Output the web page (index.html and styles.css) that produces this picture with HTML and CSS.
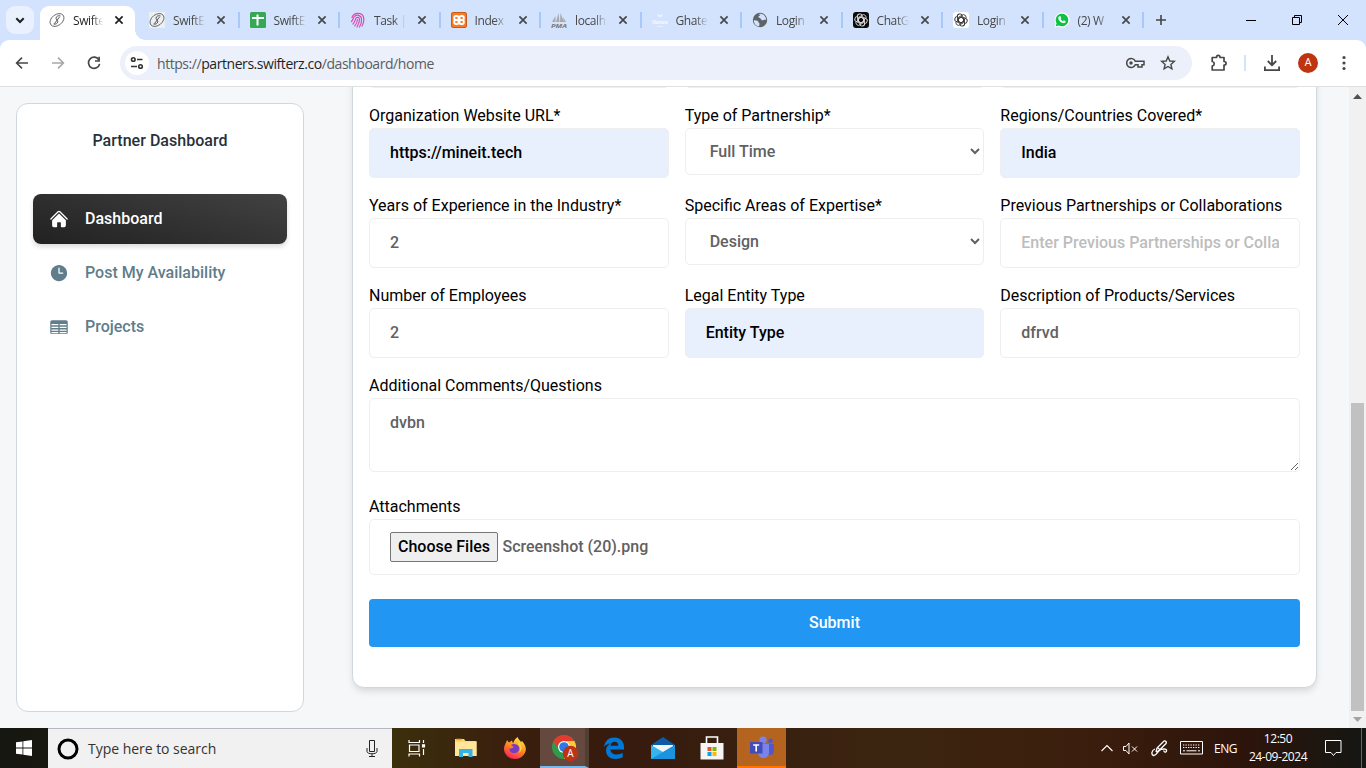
FILE: index.html
```html
<!DOCTYPE html>
<html lang="en">
<head>
<meta charset="utf-8">
<title>Partner Dashboard</title>
<link rel="stylesheet" href="styles.css">
</head>
<body>
<svg class="defs" width="0" height="0">
  <symbol id="x" viewBox="0 0 10 10"><path d="M1.4 1.4l7.2 7.2M8.6 1.4L1.4 8.6" stroke="currentColor" stroke-width="1.7"/></symbol>
  <symbol id="swift" viewBox="0 0 16 16"><g fill="none" stroke="#555"><ellipse cx="8" cy="8" rx="7.800" ry="5.400" transform="rotate(-38 8 8)" stroke-width=".8"/><path d="M11.500 4C9 3.200 7 4.500 7 6.200s2 1.800 1.800 3.600S6.500 12.500 4.500 12M10.500 5L5.500 11.500" stroke-width="1"/></g></symbol>
  <symbol id="knot" viewBox="0 0 16 16"><g fill="none" stroke="currentColor" stroke-width=".9"><path id="petal" d="M8 5.200L10.600 6.700V10.600L7.200 12.600A2.500 2.500 0 0 1 3.700 9"/><use href="#petal" transform="rotate(60 8 8)"/><use href="#petal" transform="rotate(120 8 8)"/><use href="#petal" transform="rotate(180 8 8)"/><use href="#petal" transform="rotate(240 8 8)"/><use href="#petal" transform="rotate(300 8 8)"/></g></symbol>
</svg>

<header class="tabstrip">
  <div class="tabsearch"><svg width="10" height="7" viewBox="0 0 10 7"><path d="M1.300 1.300L5 5l3.700-3.700" fill="none" stroke="#1f1f1f" stroke-width="2"/></svg></div>
  <div class="tab active"><svg class="fav"><use href="#swift"/></svg><span class="ttl">Swifte</span><svg class="close"><use href="#x"/></svg></div>
  <div class="tab"><svg class="fav paper"><use href="#swift"/></svg><span class="ttl">SwiftE</span><svg class="close"><use href="#x"/></svg></div>
  <div class="tab"><svg class="fav" viewBox="0 0 16 16"><rect width="16" height="16" rx="1.500" fill="#34a853"/><path d="M7.500 2.500v11M2 6h12" stroke="#fff" stroke-width="2"/></svg><span class="ttl">SwiftE</span><svg class="close"><use href="#x"/></svg></div>
  <div class="tab"><svg class="fav" viewBox="0 0 16 16"><g fill="none" stroke="#d84bb4" stroke-width="1.200" stroke-linecap="round"><path d="M2 5.500C3.500 0 12 0 13.500 5c.8 3 .2 6-1.500 9M1.500 9.500C3 8 3 6.500 4 5c2-3 7-2 7.500 1.500.4 3-.5 6-2 8.500M3 12c2-2 2-3.500 2.500-5 .8-2.500 4-2 4 .5 0 2.500-1 5-2.500 7.500M4.800 13.800C6.800 11.500 7.300 9.500 7.500 7.500"/></g></svg><span class="ttl">Task |</span><svg class="close"><use href="#x"/></svg></div>
  <div class="tab"><svg class="fav" viewBox="0 0 16 16"><rect x=".5" y=".5" width="15" height="15" rx="1.500" fill="#fb7a24" stroke="#c85a18"/><g fill="none" stroke="#fff" stroke-width="1.900"><rect x="3.200" y="4" width="4.400" height="4" rx="1.700"/><rect x="8.400" y="4" width="4.400" height="4" rx="1.700"/><rect x="3.200" y="8" width="4.400" height="4" rx="1.700"/><rect x="8.400" y="8" width="4.400" height="4" rx="1.700"/></g><path d="M6 8h4" stroke="#fff" stroke-width="2"/></svg><span class="ttl">Index</span><svg class="close"><use href="#x"/></svg></div>
  <div class="tab"><svg class="fav" viewBox="0 0 16 16"><path d="M1 10L4.500 4v6zM5 10L7.500 1l1 9zM9 10l.500-9L13 10zM13 10l-1-5 3 5z" fill="#a9a9a9"/><text x="0" y="15.500" font-size="6" font-weight="bold" font-style="italic" textLength="16" lengthAdjust="spacingAndGlyphs" fill="#777">PMA</text></svg><span class="ttl">localh</span><svg class="close"><use href="#x"/></svg></div>
  <div class="tab"><svg class="fav" viewBox="0 0 16 16"><path d="M6 2l1 3 1-2 1 2 1-3" fill="none" stroke="#f1f6ff"/><text x="0" y="12" font-size="4.500" font-weight="bold" textLength="16" fill="#f3f7ff">Montana</text><path d="M5 14.500h6" stroke="#e6effe"/></svg><span class="ttl">Ghate</span><svg class="close"><use href="#x"/></svg></div>
  <div class="tab"><svg class="fav" viewBox="0 0 16 16"><circle cx="8" cy="8" r="7.200" fill="#5f6368"/><path d="M1.800 8.200c3-.2 4.800.5 4.700 2.300 1.500.3.800 2.700.6 3.700C4 14 1.800 11.500 1.800 8.200zM6 2.200c1 0 2 .2 2.500.8-.8 1.200-2.300.8-2 2.400C8 5.800 9 6.500 9.500 8c1.200.8 2.200-.5 4.600-.2C14 4.500 11.500 1.800 8 1.800z" fill="#d3e3fd"/></svg><span class="ttl">Login</span><svg class="close"><use href="#x"/></svg></div>
  <div class="tab"><svg class="fav" viewBox="0 0 16 16" color="#ddd"><rect width="16" height="16" rx="3" fill="#0b0b0b"/><use href="#knot"/></svg><span class="ttl">ChatG</span><svg class="close"><use href="#x"/></svg></div>
  <div class="tab"><svg class="fav" viewBox="0 0 16 16" color="#333"><rect width="16" height="16" rx="3" fill="#fff"/><use href="#knot"/></svg><span class="ttl">Login</span><svg class="close"><use href="#x"/></svg></div>
  <div class="tab"><svg class="fav" viewBox="0 0 16 16"><path d="M.5 15.500L1.600 11.500A7.500 7.500 0 1 1 4.500 14.500z" fill="#fff"/><path d="M1.700 14.300l.9-3A6.300 6.300 0 1 1 4.900 13.500z" fill="#0cc143"/><path d="M5.300 4.300l1-.2 1 2-.7.9c.5 1 1.200 1.700 2.300 2.200l.9-.9 1.900 1c0 1.500-1.500 2.200-2.800 1.800C6.500 10.300 4.800 8.400 4.300 6.400c0-1 .3-1.600 1-2.100z" fill="#fff"/></svg><span class="ttl">(2) W</span><svg class="close"><use href="#x"/></svg></div>
  <svg class="plus" width="12" height="12" viewBox="0 0 12 12"><path d="M6 1v10M1 6h10" stroke="#444" stroke-width="1.600"/></svg>
  <div class="winctl">
    <svg width="10" height="10" viewBox="0 0 10 10"><path d="M0 5.500h10" stroke="#000"/></svg>
    <svg width="10" height="10" viewBox="0 0 10 10"><path d="M.5 2.500h7v7h-7zM2.500 2.500v-2h7v7h-2" fill="none" stroke="#000"/></svg>
    <svg width="10" height="10" viewBox="0 0 10 10"><path d="M0 0l10 10M10 0L0 10" stroke="#000"/></svg>
  </div>
</header>

<div class="toolbar">
  <svg class="nav-ic" viewBox="0 0 16 16"><path d="M14 8H3M8 2.600L2.600 8 8 13.400" fill="none" stroke="#474747" stroke-width="1.600"/></svg>
  <svg class="nav-ic" viewBox="0 0 16 16"><path d="M2 8h11M8 2.600L13.400 8 8 13.400" fill="none" stroke="#a8a8a8" stroke-width="1.600"/></svg>
  <svg class="nav-ic" viewBox="0 0 16 16"><path d="M13 5A5.600 5.600 0 1 0 13.600 8.800" fill="none" stroke="#474747" stroke-width="1.700"/><path d="M13.900 1.800v5H9V5.200h3.300V1.800z" fill="#474747"/></svg>
  <div class="omnibox">
    <div class="site"><svg width="14" height="14" viewBox="0 0 14 14"><g fill="none" stroke="#333" stroke-width="1.600"><circle cx="3.300" cy="3.500" r="1.800"/><path d="M7 3.500h5.500M1 10.500h6"/><circle cx="10.500" cy="10.500" r="1.800"/></g></svg></div>
    <div class="url"><span>https://</span>partners.swifterz.co<span>/dashboard/home</span></div>
    <svg class="key" width="19" height="12" viewBox="0 0 19 12"><path d="M9.300 4.200a4.500 4.500 0 1 0 0 3.600H12V10h4V7.800h2V4.200z" fill="none" stroke="#474747" stroke-width="1.500"/><circle cx="5" cy="6" r="1.700" fill="#474747"/></svg>
    <svg width="16" height="16" viewBox="0 0 16 16"><path d="M8 1.800l1.800 4.200 4.500.4-3.400 3 1 4.500L8 11.500l-3.900 2.400 1-4.500-3.400-3L6.200 6z" fill="none" stroke="#474747" stroke-width="1.400"/></svg>
  </div>
  <svg class="ext" width="18" height="18" viewBox="0 0 18 18"><path d="M2.200 3.500h4.300c0-2.800 3.500-2.800 3.500 0h4v4c2.800 0 2.800 3.500 0 3.500v5H2.200v-4c2.700-.6 2.700-4 0-4.500z" fill="none" stroke="#474747" stroke-width="1.700" stroke-linejoin="round"/></svg>
  <i class="vsep"></i>
  <svg class="dl" width="18" height="18" viewBox="0 0 18 18"><path d="M9 1v10M4.800 7L9 11.200 13.200 7M1.900 12.500v3.600h14.200v-3.600" fill="none" stroke="#474747" stroke-width="1.800"/></svg>
  <span class="avatar">A</span>
  <svg class="dots" width="4" height="16" viewBox="0 0 4 16"><g fill="#474747"><circle cx="2" cy="2.500" r="1.600"/><circle cx="2" cy="8" r="1.600"/><circle cx="2" cy="13.500" r="1.600"/></g></svg>
</div>

<main class="page">
  <aside class="sidebar">
    <h6>Partner Dashboard</h6>
    <nav>
      <a class="item on"><svg width="20" height="20" viewBox="0 0 24 24" fill="currentColor"><path d="M11.470 3.840a.75.75 0 011.060 0l8.690 8.690a.75.75 0 101.060-1.060l-8.689-8.690a2.250 2.250 0 00-3.182 0l-8.690 8.690a.75.75 0 001.061 1.060l8.690-8.690z"/><path d="M12 5.432l8.159 8.159c.03.03.06.058.091.086v6.198c0 1.035-.84 1.875-1.875 1.875H15a.75.75 0 01-.75-.75v-4.500a.75.75 0 00-.75-.75h-3a.75.75 0 00-.75.750V21a.75.75 0 01-.75.750H5.625a1.875 1.875 0 01-1.875-1.875v-6.198a2.290 2.290 0 00.091-.086L12 5.430z"/></svg><span>Dashboard</span></a>
      <a class="item"><svg width="20" height="20" viewBox="0 0 24 24" fill="currentColor"><path fill-rule="evenodd" d="M12 2.250c-5.385 0-9.750 4.365-9.750 9.750s4.365 9.750 9.750 9.750 9.750-4.365 9.750-9.750S17.385 2.250 12 2.250zM12.750 6a.75.75 0 00-1.500 0v6c0 .414.336.750.750.750h4.500a.75.75 0 000-1.500h-3.750V6z" clip-rule="evenodd"/></svg><span>Post My Availability</span></a>
      <a class="item"><svg width="20" height="20" viewBox="0 0 24 24"><rect x="1.500" y="4" width="21" height="16.500" rx="2" fill="currentColor"/><path d="M3 9.200h8.200M12.800 9.200H21M3 12.400h8.200M12.800 12.400H21M3 15.600h8.200M12.800 15.600H21M3 18.600h8.200M12.800 18.600H21" stroke="#fff" stroke-width="1.500"/></svg><span>Projects</span></a>
    </nav>
  </aside>

  <section class="card">
    <form class="form">
      <div class="row">
        <div class="field"><input type="text"></div><div class="field"><input type="text"></div><div class="field"><input type="text"></div>
      </div>
      <div class="row">
        <div class="field"><label>Organization Website URL*</label><input class="auto" type="text" value="https://mineit.tech"></div>
        <div class="field"><label>Type of Partnership*</label><select><option>Full Time</option></select></div>
        <div class="field"><label>Regions/Countries Covered*</label><input class="auto" type="text" value="India"></div>
      </div>
      <div class="row">
        <div class="field"><label>Years of Experience in the Industry*</label><input type="text" value="2"></div>
        <div class="field"><label>Specific Areas of Expertise*</label><select><option>Design</option></select></div>
        <div class="field"><label>Previous Partnerships or Collaborations</label><input type="text" placeholder="Enter Previous Partnerships or Collaborations"></div>
      </div>
      <div class="row">
        <div class="field"><label>Number of Employees</label><input type="text" value="2"></div>
        <div class="field"><label>Legal Entity Type</label><input class="auto" type="text" value="Entity Type"></div>
        <div class="field"><label>Description of Products/Services</label><input type="text" value="dfrvd"></div>
      </div>
      <div class="field"><label>Additional Comments/Questions</label><textarea>dvbn</textarea></div>
      <div class="field attach"><label>Attachments</label><div class="file"><button type="button">Choose Files</button><span>Screenshot (20).png</span></div></div>
      <button class="submit" type="button">Submit</button>
    </form>
  </section>

  <div class="scrollbar">
    <svg class="up" width="9" height="5" viewBox="0 0 9 5"><path d="M0 5h9L4.500 0z" fill="#505050"/></svg>
    <i class="thumb"></i>
    <svg class="down" width="9" height="5" viewBox="0 0 9 5"><path d="M0 0h9L4.500 5z" fill="#a3a3a3"/></svg>
  </div>
</main>

<footer class="taskbar">
  <div class="cell start"><svg width="16" height="16" viewBox="0 0 16 16" fill="#fff"><path d="M0 2.300l6.500-.9v6.200H0zM7.300 1.300L16 0v7.600H7.300zM0 8.400h6.500v6.200L0 13.700zM7.300 8.400H16V16l-8.700-1.200z"/></svg></div>
  <div class="search"><svg width="22" height="22" viewBox="0 0 22 22"><circle cx="11" cy="11" r="9" fill="none" stroke="#000" stroke-width="3"/></svg><span>Type here to search</span><svg width="12" height="17" viewBox="0 0 12 17"><path d="M3.500.5h5v11h-5zM1 8v3.500c0 3 10 3 10 0V8M6 14v2.500M3 16.500h6" fill="none" stroke="#222"/></svg></div>
  <div class="cell"><svg width="18" height="18" viewBox="0 0 18 18" fill="none" stroke="#fff" stroke-width="1.200"><path d="M1 1v2.500h10.500V1M1.500 6h9.500v6.500H1.500zM1 17.500V15h10.500v2.500M15.500 1v3M15.500 10v6"/><path d="M14.500 5.800h2v2h-2z" fill="#fff"/></svg></div>
  <div class="cell"><svg width="24" height="20" viewBox="0 0 24 20"><path d="M1 1h9l1.500 2H22.500V18H1z" fill="#ffd969"/><path d="M1 4h21.500v14H1z" fill="#ffe69a"/><path d="M2 1.500h6" stroke="#f5a623" stroke-width="1.500"/><path d="M5 19v-8h13.500v8h-4v-4H9v4z" fill="#36b3e6"/></svg></div>
  <div class="cell"><svg width="24" height="24" viewBox="0 0 24 24"><defs><linearGradient id="ff" x1=".8" y1="0" x2=".3" y2="1"><stop offset="0" stop-color="#fff24a"/><stop offset=".5" stop-color="#ff8a1e"/><stop offset="1" stop-color="#f5205f"/></linearGradient></defs><path d="M4 4l2 2.500 3-2 1 3c1-3 2-5 5-6.500-.5 2 2 3 3 5l1-1c3 3 4.500 7 3.500 10.500C21 20 17 23 12 23 6 23 1.500 19 1 13.500 1 9 3 7.500 4 4z" fill="url(#ff)"/><path d="M8 9c2-2 7-1 8 2 1 4-2 6-5 6-3 0-5-2-4.500-4.500 1.500 0 3.500 0 4-1.500z" fill="#7a3bc4"/><path d="M16 6c4 4 3 9 0 11 2-4 1-7-1-9z" fill="#ffd43b"/></svg></div>
  <div class="cell chrome"><svg width="28" height="28" viewBox="0 0 28 28"><circle cx="13" cy="13" r="12" fill="#2c9b4b"/><path d="M2.600 7A12 12 0 0 1 23.400 7H13a6 6 0 0 0-5.200 3L5 13z" fill="#e33b2e"/><path d="M23.400 7A12 12 0 0 1 13 25l5.200-9A6 6 0 0 0 16 8l-1-1z" fill="#fcc934"/><circle cx="13" cy="13" r="6" fill="#fff"/><circle cx="13" cy="13" r="4.800" fill="#2f78e6"/><circle cx="19.500" cy="19.500" r="7.800" fill="#bb3416"/><text x="19.500" y="23.200" text-anchor="middle" font-size="10" fill="#fff">A</text></svg></div>
  <div class="cell"><svg width="22" height="22" viewBox="0 0 22 22"><path d="M1 10C2 3.500 6 .5 11.500.5 17 .5 21 4.500 21 10v2.500H7.300c.3 3 3 5 6.200 5 2.600 0 4.500-.6 6.200-1.700v4.500C17.500 21.300 15.300 22 12.500 22 7 22 3 18.500 3 13.500c0-3.300 2-5.800 4.700-7.200C5 6.800 2.500 8 1 10zM7.500 8.700h7.800c0-2.500-1.300-4-3.700-4S7.700 6.500 7.500 8.700z" fill="#0078d7"/></svg></div>
  <div class="cell"><svg width="24" height="22" viewBox="0 0 24 22"><path d="M0 8L12 0l12 8v4H0z" fill="#0a5ba8"/><path d="M2 8h20v8H2z" fill="#f4f4f4"/><path d="M0 8l12 7 12-7v14H0z" fill="#35b5ef"/><path d="M0 22L24 8v14z" fill="#1b93df"/></svg></div>
  <div class="cell"><svg width="24" height="24" viewBox="0 0 24 24"><path d="M6.500 7V1h11v6" fill="none" stroke="#fff" stroke-width="1.600"/><path d="M.5 7h23v16.500H.5z" fill="#f5f5f5"/><path d="M7.500 11h4v4h-4z" fill="#f25022"/><path d="M12.500 11h4v4h-4z" fill="#7fba00"/><path d="M7.500 16h4v4h-4z" fill="#00a4ef"/><path d="M12.500 16h4v4h-4z" fill="#ffb900"/></svg></div>
  <div class="cell teams"><svg width="24" height="23" viewBox="0 0 24 23"><circle cx="13" cy="4" r="3.600" fill="#7b83eb"/><circle cx="20.500" cy="4.800" r="2.400" fill="#5059c9"/><path d="M16 8h8v7c0 4-4 5-6 3z" fill="#5059c9"/><path d="M8 8h11v8c0 8-11 8-11 0z" fill="#7b83eb"/><path d="M0 6h12.500v11.500H0z" fill="#444db5"/><path d="M3.200 9h6M6.200 9v6.500" stroke="#fff" stroke-width="1.600"/></svg></div>
  <div class="tray">
    <svg class="t1" width="12" height="8" viewBox="0 0 12 8"><path d="M.5 7L6 1.500 11.500 7" fill="none" stroke="#fff" stroke-width="1.100"/></svg>
    <svg class="t2" width="15" height="13" viewBox="0 0 15 13"><path d="M.5 4.500H3l3-3.500v11l-3-3.500H.5zM9 4.500l5 5M14 4.500l-5 5" fill="none" stroke="#fff"/></svg>
    <svg class="t3" width="17" height="17" viewBox="0 0 17 17"><path d="M4 9C.5 10 0 15 2.500 15.500 6 16 6 11 10 9.500c3-1 6-.5 5.500 1.500s-3 1-2.500-.5M5 12L6 8l7-7c1.500-.5 3 1 2 2.500L9.500 9 5.500 12.500M7 8l2.500 2" fill="none" stroke="#fff" stroke-width="1.300"/></svg>
    <svg class="t4" width="23" height="14" viewBox="0 0 23 14"><path d="M.5.500h22v12.500H.5z" fill="none" stroke="#fff"/><path d="M3 4h17M3 6.500h17" stroke="#fff" stroke-dasharray="1.300 1.200"/><path d="M3 9.800h2M6.500 9.800h10M18 9.800h2" stroke="#fff"/></svg>
    <span class="eng">ENG</span>
    <div class="clock"><span>12:50</span><span>24-09-2024</span></div>
    <svg class="t5" width="17" height="17" viewBox="0 0 17 17"><path d="M.5.500h15.500v12H11l-2.500 3-2.500-3H.5z" fill="none" stroke="#fff"/></svg>
    <i class="peek"></i>
  </div>
</footer>
</body>
</html>
```

FILE: styles.css
```css
* { box-sizing: border-box; }
body { margin: 0; width: 1366px; height: 768px; overflow: hidden; display: flex; flex-direction: column; font-family: Roboto, sans-serif; font-size: 16px; background: #d3e3fd; }
svg { flex: none; display: block; }
.defs { position: absolute; }

/* browser tab strip */
.tabstrip { height: 40px; flex: none; display: flex; background: #d3e3fd; font: 12px "Open Sans", sans-serif; color: #444; }
.tabsearch { width: 28px; height: 28px; margin: 6px 6px 0; border-radius: 9px; background: #e9f1fe; display: flex; align-items: center; justify-content: center; }
.tab { width: 100.500px; height: 24px; margin-top: 8px; padding: 0 12px 0 10px; display: flex; align-items: center; position: relative; color: #474747; }
.tab::after { content: ""; position: absolute; right: 0; top: 4px; width: 2px; height: 16px; background: #a8c7fa; }
.tab.active { width: 95px; height: 34px; margin: 6px 4px 0 0; padding: 0 11px 6px 9px; border-radius: 9px 9px 0 0; background: #fff; color: #1f1f1f; }
.tab.active::after { right: -10px; top: auto; bottom: 0; width: 10px; height: 10px; background: radial-gradient(circle at 100% 0, transparent 9.500px, #fff 10px); }
.fav { width: 16px; height: 16px; }
.paper { background: #eeeff1; }
.ttl { width: 34px; margin: 0 9px 0 8px; white-space: nowrap; letter-spacing: -.4px; -webkit-mask-image: linear-gradient(90deg, #000 58%, transparent 94%); mask-image: linear-gradient(90deg, #000 58%, transparent 94%); }
.close { width: 10px; height: 10px; }
.plus { margin: 14px 0 0 11px; }
.winctl { margin: 15px 18px 0 auto; display: flex; gap: 36px; }

/* browser toolbar */
.toolbar { height: 47px; flex: none; display: flex; align-items: center; padding-left: 14px; background: #fff; border-bottom: 1px solid #dfe1e0; border-radius: 9px 9px 0 0; }
.nav-ic { width: 16px; height: 16px; margin-right: 20px; }
.omnibox { width: 1072px; height: 34px; margin-left: -2px; padding: 0 16px 0 5px; border-radius: 17px; background: #ecf0fa; display: flex; align-items: center; }
.site { width: 24px; height: 24px; border-radius: 50%; background: #fff; display: flex; align-items: center; justify-content: center; }
.url { margin-left: 8px; flex: 1; font: 14px "Open Sans", sans-serif; letter-spacing: -.44px; color: #1f1f1f; white-space: nowrap; }
.url span { color: #5a5d61; }
.key { margin-right: 15px; }
.ext { margin-left: 18px; }
.vsep { width: 2px; height: 16px; background: #d3e3fd; margin: 0 17px 0 16px; }
.avatar { width: 20px; height: 20px; margin: 0 24px 0 17px; border-radius: 50%; background: #be3410; color: #fff; font-size: 11px; line-height: 20px; text-align: center; }

/* page */
.page { height: 641px; flex: none; display: flex; overflow: hidden; background: #f5f7f9; }
.sidebar { width: 288px; height: 609px; margin: 16px 48px 0 16px; padding: 24px 16px; flex: none; border: 1px solid #cfd8dc; border-radius: 12px; background: #fff; color: #263238; }
.sidebar h6 { margin: 0 0 41px; font-size: 16px; line-height: 25px; font-weight: 500; text-align: center; letter-spacing: .03px; }
.sidebar nav { display: flex; flex-direction: column; gap: 4px; }
.item { height: 50px; padding-left: 16px; display: flex; align-items: center; gap: 16px; border-radius: 8px; font-weight: 500; color: #607d8b; }
.item span { padding-bottom: 2px; }
.item.on { color: #fff; background: linear-gradient(195deg, #424242, #212121); box-shadow: 0 3px 5px rgba(0,0,0,.14); }
.card { width: 965px; height: 651px; margin-top: -50px; padding: 0 16px; flex: none; border: 1px solid #cfd8dc; border-radius: 12px; background: #fff; box-shadow: 0 4px 7px -1px rgba(0,0,0,.13); }
.form { display: flex; flex-direction: column; }
.row { display: grid; grid-template-columns: repeat(3, minmax(0, 1fr)); gap: 16px; margin-bottom: 16px; }
.field { display: flex; flex-direction: column; }
label { line-height: 24px; color: #000; }
input, select, textarea, .file { width: 100%; height: 50px; border: 1px solid #eee; border-radius: 5px; background: #fff; padding: 0 20px; font: 500 16px Roboto, sans-serif; color: #616161; outline: none; }
input { padding-bottom: 2px; }
input::placeholder { color: #bdbdbd; }
input.auto { background: #e8f0fe; color: #000; }
select { height: 47px; }
textarea { height: 74px; padding: 14px 20px; }
.attach { margin-top: 23px; }
.file { height: 56px; display: flex; align-items: center; gap: 4px; }
.file button { height: 30px; padding: 0 7px 2px; border: 1px solid #767676; border-radius: 2px; background: #efefef; color: #000; font: 500 16px Roboto, sans-serif; }
.file span { padding: 0 0 2px .4px; }
.submit { height: 48px; margin-top: 24px; padding-bottom: 3px; border: 0; border-radius: 4px; background: #2196f3; color: #fff; font: 500 16px Roboto, sans-serif; }
.scrollbar { width: 17px; margin-left: auto; background: #f1f1f1; display: flex; flex-direction: column; align-items: center; }
.up { margin-top: 7px; }
.thumb { width: 13px; height: 308px; margin-top: 304px; background: #c1c1c1; }
.down { margin-top: 6px; }

/* taskbar */
.taskbar { height: 40px; flex: none; display: flex; background: linear-gradient(90deg, #151711 0, #191810 48px, #3b2f0c 392px, #3a1f0e 510px, #361b0e 630px, #3b2510 900px, #3c1e0d 1080px, #2c140b 1250px, #141713 1366px); font-family: "Open Sans", sans-serif; color: #fff; }
.cell { width: 49.300px; display: flex; align-items: center; justify-content: center; }
.start { width: 48px; }
.search { width: 344px; padding: 0 14px 0 9px; display: flex; align-items: center; background: #f1f1f1; border-top: 1px solid #b5b8c0; color: #333; }
.search span { flex: 1; margin-left: 9px; font-size: 14px; letter-spacing: -.03px; white-space: nowrap; }
.chrome { background: #66493e; border-bottom: 2px solid #76b9ed; border-right: 4px solid #513e35; padding-left: 5px; }
.chrome svg { margin-top: 2px; }
.teams { background: #b56420; border-bottom: 2px solid #ff7300; }
.tray { margin-left: auto; display: flex; align-items: center; font-size: 12px; }
.t2 { margin-left: 10px; }
.t3 { margin-left: 13px; }
.t4 { margin-left: 12px; }
.eng { margin-left: 11px; width: 24px; letter-spacing: -.5px; }
.clock { width: 60px; margin-left: 10px; display: flex; flex-direction: column; align-items: center; line-height: 18px; white-space: nowrap; letter-spacing: -.45px; }
.t5 { margin-left: 17px; }
.peek { width: 1px; height: 40px; margin: 0 4px 0 19px; background: #666; }
```
